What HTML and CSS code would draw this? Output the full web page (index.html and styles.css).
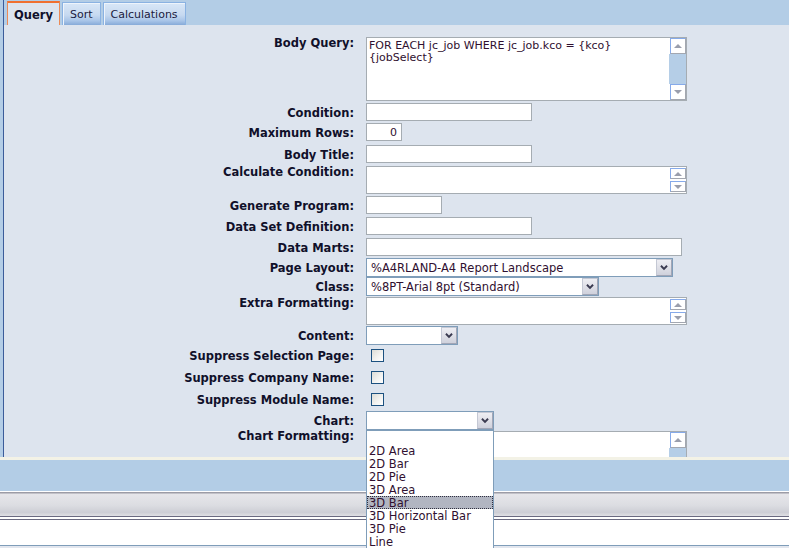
FILE: index.html
```html
<!DOCTYPE html>
<html>
<head>
<meta charset="utf-8">
<title>Query</title>
<link rel="stylesheet" href="styles.css">
</head>
<body>
<div class="app">
  <div class="frame">
    <div class="tabbar">
      <div class="tab active">Query</div>
      <div class="tab">Sort</div>
      <div class="tab">Calculations</div>
    </div>
    <div class="panel">
      <div class="form">
        <div class="lbl top">Body Query:</div>
        <div class="fld">
          <div class="ta ta-big">
            <div class="ta-text">FOR EACH jc_job WHERE jc_job.kco = {kco}<br>{jobSelect}</div>
            <div class="sb">
              <span class="sbtn"><span class="tri up"></span></span>
              <span class="track"></span>
              <span class="sbtn"><span class="tri down"></span></span>
            </div>
          </div>
        </div>

        <div class="lbl">Condition:</div>
        <div class="fld"><div class="in w166"></div></div>

        <div class="lbl">Maximum Rows:</div>
        <div class="fld"><div class="in w36 num">0</div></div>

        <div class="lbl">Body Title:</div>
        <div class="fld"><div class="in w166"></div></div>

        <div class="lbl top">Calculate Condition:</div>
        <div class="fld">
          <div class="ta ta-small">
            <div class="ta-text"></div>
            <div class="sb sb-small">
              <span class="sbtn s"><span class="tri up"></span></span>
              <span class="sbtn s"><span class="tri down"></span></span>
            </div>
          </div>
        </div>

        <div class="lbl">Generate Program:</div>
        <div class="fld"><div class="in w76"></div></div>

        <div class="lbl">Data Set Definition:</div>
        <div class="fld"><div class="in w166"></div></div>

        <div class="lbl">Data Marts:</div>
        <div class="fld"><div class="in w316"></div></div>

        <div class="lbl sel-l">Page Layout:</div>
        <div class="fld">
          <div class="sel w307"><span class="sel-text">%A4RLAND-A4 Report Landscape</span><span class="dd"><svg width="16" height="17" viewBox="0 0 16 17"><polyline points="4.5,6.5 8,10 11.5,6.5" fill="none" stroke="#3a3a50" stroke-width="2.2"/></svg></span></div>
        </div>

        <div class="lbl sel-l">Class:</div>
        <div class="fld">
          <div class="sel w233"><span class="sel-text">%8PT-Arial 8pt (Standard)</span><span class="dd"><svg width="16" height="17" viewBox="0 0 16 17"><polyline points="4.5,6.5 8,10 11.5,6.5" fill="none" stroke="#3a3a50" stroke-width="2.2"/></svg></span></div>
        </div>

        <div class="lbl top">Extra Formatting:</div>
        <div class="fld">
          <div class="ta ta-small">
            <div class="ta-text"></div>
            <div class="sb sb-small">
              <span class="sbtn s"><span class="tri up"></span></span>
              <span class="sbtn s"><span class="tri down"></span></span>
            </div>
          </div>
        </div>

        <div class="lbl sel-l">Content:</div>
        <div class="fld">
          <div class="sel w92"><span class="sel-text"></span><span class="dd"><svg width="16" height="17" viewBox="0 0 16 17"><polyline points="4.5,6.5 8,10 11.5,6.5" fill="none" stroke="#3a3a50" stroke-width="2.2"/></svg></span></div>
        </div>

        <div class="lbl chk-l">Suppress Selection Page:</div>
        <div class="fld"><span class="chk"></span></div>

        <div class="lbl chk-l">Suppress Company Name:</div>
        <div class="fld"><span class="chk"></span></div>

        <div class="lbl chk-l">Suppress Module Name:</div>
        <div class="fld"><span class="chk"></span></div>

        <div class="lbl sel-l">Chart:</div>
        <div class="fld">
          <div class="sel w128 chart"><span class="sel-text"></span><span class="dd"><svg width="16" height="17" viewBox="0 0 16 17"><polyline points="4.5,6.5 8,10 11.5,6.5" fill="none" stroke="#3a3a50" stroke-width="2.2"/></svg></span>
            <ul class="list">
              <li>&nbsp;</li>
              <li>2D Area</li>
              <li>2D Bar</li>
              <li>2D Pie</li>
              <li>3D Area</li>
              <li class="hl">3D Bar</li>
              <li>3D Horizontal Bar</li>
              <li>3D Pie</li>
              <li>Line</li>
            </ul>
          </div>
        </div>

        <div class="lbl top cf-l">Chart Formatting:</div>
        <div class="fld">
          <div class="ta ta-cut">
            <div class="ta-text"></div>
            <div class="sb">
              <span class="sbtn"><span class="tri up"></span></span>
              <span class="track"></span>
            </div>
          </div>
        </div>
      </div>
    </div>
  </div>
  <div class="sep"></div>
  <div class="bluebar"></div>
  <div class="greybar"></div>
  <div class="lines"></div>
  <div class="whitearea"></div>
  <div class="foot"></div>
</div>
</body>
</html>
```

FILE: styles.css
```css
* { box-sizing: border-box; }

body {
  margin: 0;
  background: #ffffff;
  font-family: "DejaVu Sans", Verdana, sans-serif;
  font-size: 11px;
  color: #301030;
}

.app {
  width: 789px;
  height: 548px;
  overflow: hidden;
  position: relative;
}

.frame {
  background: #b3cde6;
  padding-left: 3px;
}

.tabbar {
  height: 25px;
  display: flex;
  align-items: flex-end;
  gap: 2px;
  padding-left: 3px;
  border-left: 1px solid #3b5c9a;
  background: #b3cde6;
}

.tab {
  height: 23px;
  padding: 0 7px;
  border: 1px solid #8ab2e2;
  border-bottom: none;
  background: linear-gradient(#d9e7f7 0%, #c6d9f0 55%, #a9c5e8 80%, #86aad8 100%);
  box-shadow: inset 1px 1px 0 #eef4fb;
  color: #1a1a40;
  font-size: 11px;
  line-height: 24px;
  white-space: nowrap;
}

.tab.active {
  height: 24px;
  padding: 0 6px;
  border: 1px solid #ec8a55;
  border-top: 2px solid #f07030;
  border-bottom: none;
  background: #dde4ee;
  box-shadow: none;
  font-weight: bold;
  font-size: 11.5px;
  color: #10102a;
  line-height: 25px;
}

.panel {
  height: 432px;
  background: #dde4ee;
  border-left: 1px solid #3b5c9a;
  padding-top: 12px;
}

.form {
  display: grid;
  grid-template-columns: 350px 1fr;
  column-gap: 12px;
  grid-template-rows: 66px 20px 22px 21px 30px 21px 21px 20px 19px 20px 29px 20px 22px 22px 21px 20px 26px;
}

.lbl {
  text-align: right;
  font-weight: bold;
  font-size: 11.5px;
  color: #10102a;
  white-space: nowrap;
  line-height: 20px;
}

.lbl.top { line-height: 13px; }
.lbl.sel-l { line-height: 21px; }
.lbl.chk-l { line-height: 21px; }
.lbl.cf-l { line-height: 11px; }

.fld { position: relative; }

.in {
  height: 18px;
  border: 1px solid #a5acb2;
  background: #ffffff;
  padding: 0 4px;
  line-height: 17px;
}

.in.num { text-align: right; }

.w36 { width: 36px; }
.w76 { width: 76px; }
.w92 { width: 92px; }
.w128 { width: 128px; }
.w166 { width: 166px; }
.w233 { width: 233px; }
.w307 { width: 307px; }
.w316 { width: 316px; }

.ta {
  width: 321px;
  border: 1px solid #a5acb2;
  background: #ffffff;
  display: flex;
}

.ta-big { height: 64px; }
.ta-small { height: 28px; }
.ta-cut { height: 26px; border-bottom: none; overflow: hidden; }

.ta-text {
  flex: 1;
  padding: 2px 2px;
  line-height: 12px;
  white-space: nowrap;
}

.sb {
  width: 17px;
  display: flex;
  flex-direction: column;
  flex: none;
}

.ta-cut .sb { height: 62px; }

.sb-small {
  padding: 1px 0;
  justify-content: space-between;
}

.sbtn {
  width: 16px;
  height: 16px;
  margin-left: 1px;
  border: 1px solid;
  border-color: #86aaea #a3a7b0 #a3a7b0 #86aaea;
  background: #ffffff;
  display: flex;
  align-items: center;
  justify-content: center;
  flex: none;
}

.sbtn.s { height: 11px; }

.track {
  flex: 1;
  background: #b5cee7;
}

.tri {
  width: 0;
  height: 0;
  border-left: 4px solid transparent;
  border-right: 4px solid transparent;
}

.tri.up { border-bottom: 4px solid #9a9eac; }
.tri.down { border-top: 4px solid #9a9eac; }

.sel {
  height: 19px;
  border: 1px solid #7f9db9;
  background: #ffffff;
  display: flex;
  align-items: stretch;
  position: relative;
}

.sel-text {
  flex: 1;
  padding-left: 4px;
  font-size: 11.5px;
  line-height: 19px;
  white-space: nowrap;
  overflow: hidden;
}

.dd {
  width: 16px;
  flex: none;
  border: 1px solid;
  border-color: #c4c8d4 #a2a6b6 #a2a6b6 #c4c8d4;
  background: linear-gradient(#eeeef3, #dcdde5 60%, #cfd1dc);
  display: flex;
  align-items: center;
  justify-content: center;
}

.dd svg { display: block; }

.chk {
  display: block;
  width: 13px;
  height: 13px;
  margin: 3px 0 0 5px;
  border: 1px solid #1c5180;
  background: linear-gradient(135deg, #dcdcd6 0%, #f4f4f2 60%, #ffffff 100%);
}

.list {
  position: absolute;
  left: -1px;
  top: 18px;
  width: 128px;
  margin: 0;
  padding: 0;
  list-style: none;
  background: #ffffff;
  border: 1px solid #7f9db9;
  z-index: 10;
}

.list li {
  height: 13px;
  font-size: 11.5px;
  line-height: 15px;
  padding-left: 2px;
  white-space: nowrap;
}

.list li.hl {
  background: #b1b5c1;
  outline: 1px dotted #303040;
  outline-offset: -1px;
}

.sep {
  height: 3px;
  background: #f3f2e6;
}

.bluebar {
  height: 31px;
  background: #b3cde6;
}

.greybar {
  height: 25px;
  border-top: 1px solid #ffffff;
  background: linear-gradient(#9c9ca6 0, #9c9ca6 1px, #e6e6ea 2px, #dcdde2 55%, #cdced5 85%, #e0e0e4 100%);
}

.lines {
  height: 4px;
  border-top: 1px solid #6a6a80;
  border-bottom: 1px solid #6a6a80;
  background: #ffffff;
}

.whitearea {
  height: 25px;
  background: #ffffff;
}

.foot {
  height: 20px;
  border-top: 1px solid #7f9db9;
  background: #e2e6ee;
}
```
